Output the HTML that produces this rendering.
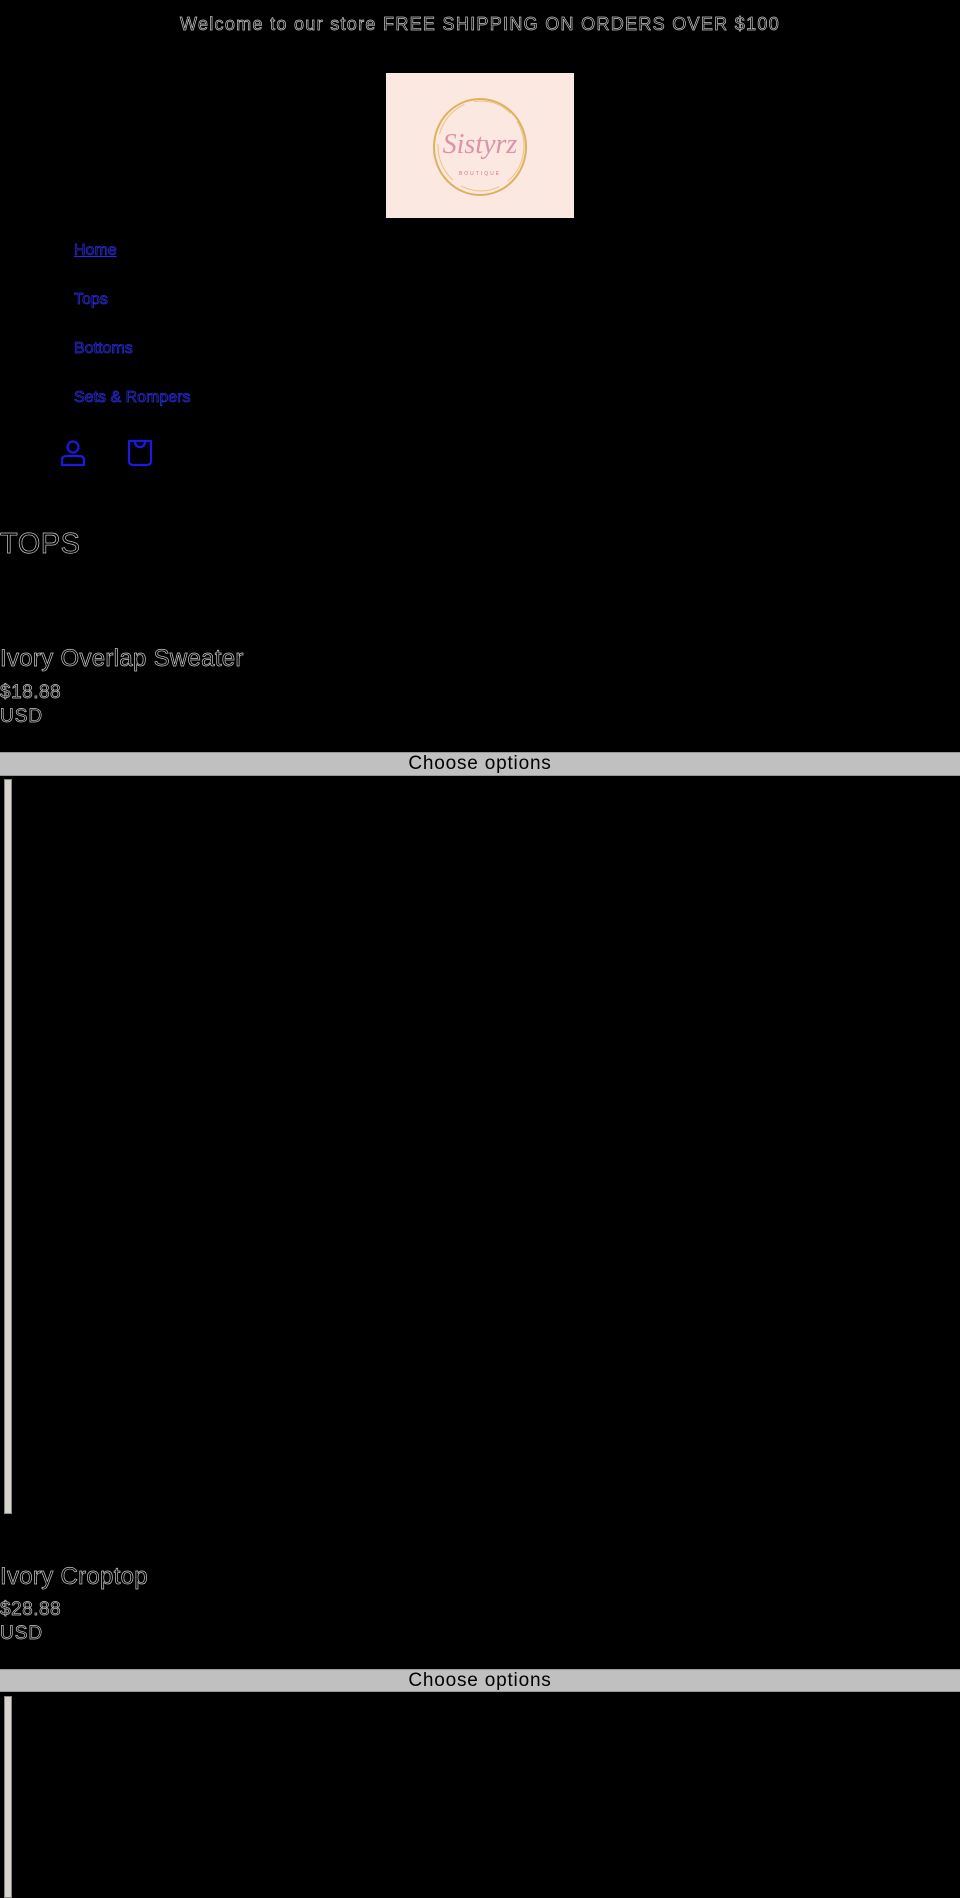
<!DOCTYPE html>
<html><head><meta charset="utf-8"><style>
html,body{margin:0;padding:0;background:#000;width:960px;height:1875px;overflow:hidden;font-family:"Liberation Sans",sans-serif;}
.o{color:#000;-webkit-text-stroke:0.7px #c8c8c8;}
.ab{position:absolute;white-space:nowrap;}
.nav{position:absolute;left:74px;font-size:16px;color:#000;-webkit-text-stroke:0.8px #2a2ad8;}
.btn{position:absolute;left:0;width:960px;background:#c0c0c0;color:#000;font-size:19px;text-align:center;letter-spacing:0.8px;border-top:1px solid #999;border-bottom:1px solid #999;}
.bar{position:absolute;left:4px;width:6px;background:#d6d3cb;border:1px solid #888;}
</style></head><body>
<div class="ab o" style="left:0;width:960px;top:14px;text-align:center;font-size:18px;letter-spacing:1.3px;">Welcome to our store FREE SHIPPING ON ORDERS OVER $100</div>
<div class="ab" style="left:386px;top:73px;width:188px;height:145px;background:#fae8e1;">
<svg width="188" height="145" viewBox="0 0 188 145">
<ellipse cx="94" cy="74" rx="46" ry="48" fill="none" stroke="#e0b060" stroke-width="2"/>
<ellipse cx="95" cy="73" rx="43" ry="45" fill="none" stroke="#ecc47a" stroke-width="1" stroke-dasharray="40 10"/>
<text x="94" y="80" text-anchor="middle" font-family="Liberation Serif,serif" font-style="italic" font-size="28" fill="#e090a8">Sistyrz</text>
<text x="94" y="102" text-anchor="middle" font-family="Liberation Sans,sans-serif" font-size="5" letter-spacing="2" fill="#d07890">BOUTIQUE</text>
</svg></div>
<div class="nav" style="top:242px;text-decoration:underline;">Home</div>
<div class="nav" style="top:291px;">Tops</div>
<div class="nav" style="top:340px;">Bottoms</div>
<div class="nav" style="top:389px;">Sets &amp; Rompers</div>
<svg class="ab" style="left:60px;top:439px" width="26" height="28" viewBox="0 0 26 28" fill="none" stroke="#1a1ae0" stroke-width="2.2">
<circle cx="13" cy="8" r="5.5"/><path d="M2 26 V21 Q2 17 7 17 H19 Q24 17 24 21 V26 Z"/></svg>
<svg class="ab" style="left:127px;top:439px" width="26" height="28" viewBox="0 0 26 28" fill="none" stroke="#1a1ae0" stroke-width="2.2">
<path d="M2 2 H24 V22 Q24 26 20 26 H6 Q2 26 2 22 Z"/><path d="M8 2 Q8 8 13 8 Q18 8 18 2"/></svg>
<div class="ab o" style="left:0;top:528px;font-size:29px;letter-spacing:0.5px;">TOPS</div>
<div class="ab o" style="left:0;top:645px;font-size:24px;letter-spacing:0.3px;">Ivory Overlap Sweater</div>
<div class="ab o" style="left:0;top:682px;font-size:19px;letter-spacing:0.5px;">$18.88</div>
<div class="ab o" style="left:0;top:706px;font-size:19px;letter-spacing:1px;">USD</div>
<div class="btn" style="top:752px;height:22px;line-height:22px;">Choose options</div>
<div class="bar" style="top:779px;height:733px;"></div>
<div class="ab o" style="left:0;top:1563px;font-size:24px;letter-spacing:0.3px;">Ivory Croptop</div>
<div class="ab o" style="left:0;top:1599px;font-size:19px;letter-spacing:0.5px;">$28.88</div>
<div class="ab o" style="left:0;top:1623px;font-size:19px;letter-spacing:1px;">USD</div>
<div class="btn" style="top:1669px;height:21px;line-height:21px;">Choose options</div>
<div class="bar" style="top:1696px;height:200px;"></div>
</body></html>
